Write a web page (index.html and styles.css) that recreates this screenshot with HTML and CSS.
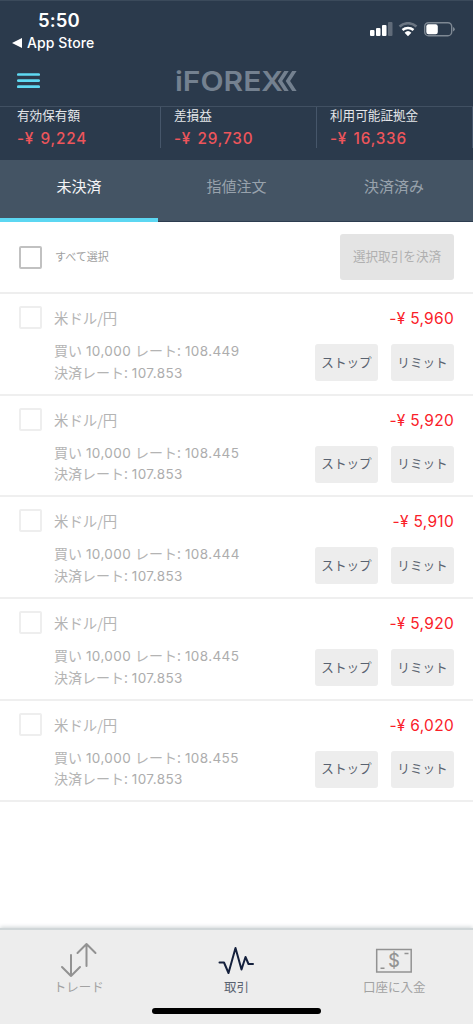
FILE: index.html
```html
<!DOCTYPE html>
<html lang="ja">
<head>
<meta charset="utf-8">
<title>iFOREX</title>
<link rel="stylesheet" href="styles.css">
</head>
<body>
<div class="app">
  <header class="header">
    <div class="status">
      <div class="clock-block">
        <div class="clock">5:50</div>
        <div class="back"><svg width="10" height="10" viewBox="0 0 10 10"><path d="M0 5 10 0v10z" fill="#fff"/></svg><span>App Store</span></div>
      </div>
      <svg class="status-icons" width="86" height="16" viewBox="0 0 86 16">
        <g fill="#fff"><rect x="0" y="8" width="4.500" height="6" rx="1"/><rect x="6" y="6" width="4.500" height="8" rx="1"/><rect x="12" y="3" width="4.500" height="11" rx="1"/><rect x="18" y="0" width="4.500" height="14" rx="1" opacity=".25"/></g>
        <g fill="none" stroke="#fff" stroke-width="2.500"><path d="M29.500 4.500a12.500 12.500 0 0 1 17 0" opacity=".3"/><path d="M32.500 8a8.500 8.500 0 0 1 11 0"/></g>
        <path d="m34.600 10.700 3.400 3.600 3.400-3.600a5 5 0 0 0-6.800 0z" fill="#fff"/>
        <rect x="54.700" y=".7" width="27" height="13" rx="3.800" fill="none" stroke="#7e8893" stroke-width="1.400"/>
        <rect x="56.300" y="2.200" width="11.500" height="10" rx="2.200" fill="#fff"/>
        <path d="M83 5v4.500q1.800-.6 1.800-2.200T83 5z" fill="#7e8893"/>
      </svg>
    </div>
    <div class="brand-row">
      <svg class="burger" width="23" height="16" viewBox="0 0 23 16"><path d="M1.300 1.500h20.400M1.300 7.600h20.400M1.300 13.700h20.400" stroke="#5fd9f2" stroke-width="2.700" stroke-linecap="round"/></svg>
      <svg class="logo" width="122" height="40" viewBox="0 0 122 40">
        <text class="logo-text" x="-1" y="28" textLength="108" lengthAdjust="spacingAndGlyphs">iFOREX</text>
        <path d="M108.300 8h4.400l-6.500 10 6.500 10h-4.400l-6.500-10zM116.200 8h4.400l-6.500 10 6.500 10h-4.400l-6.500-10z" fill="#748190"/>
      </svg>
    </div>
    <div class="summary">
      <div class="sum"><div class="sum-label">有効保有額</div><div class="sum-value">-¥ 9,224</div></div>
      <div class="sum"><div class="sum-label">差損益</div><div class="sum-value">-¥ 29,730</div></div>
      <div class="sum"><div class="sum-label">利用可能証拠金</div><div class="sum-value">-¥ 16,336</div></div>
    </div>
  </header>
  <nav class="tabs"><div class="tab active">未決済</div><div class="tab">指値注文</div><div class="tab">決済済み</div></nav>
  <div class="select-row"><span class="check"></span><span class="select-label">すべて選択</span><button class="close-btn">選択取引を決済</button></div>
  <main class="list">
    <section class="row"><span class="check light"></span><div class="info"><div class="pair">米ドル/円</div><div class="line">買い <b>10,000</b> レート: <b>108.449</b></div><div class="line">決済レート: <b>107.853</b></div></div><div class="side"><div class="pl">-¥ 5,960</div><div class="actions"><button>ストップ</button><button>リミット</button></div></div></section>
    <section class="row"><span class="check light"></span><div class="info"><div class="pair">米ドル/円</div><div class="line">買い <b>10,000</b> レート: <b>108.445</b></div><div class="line">決済レート: <b>107.853</b></div></div><div class="side"><div class="pl">-¥ 5,920</div><div class="actions"><button>ストップ</button><button>リミット</button></div></div></section>
    <section class="row"><span class="check light"></span><div class="info"><div class="pair">米ドル/円</div><div class="line">買い <b>10,000</b> レート: <b>108.444</b></div><div class="line">決済レート: <b>107.853</b></div></div><div class="side"><div class="pl">-¥ 5,910</div><div class="actions"><button>ストップ</button><button>リミット</button></div></div></section>
    <section class="row"><span class="check light"></span><div class="info"><div class="pair">米ドル/円</div><div class="line">買い <b>10,000</b> レート: <b>108.445</b></div><div class="line">決済レート: <b>107.853</b></div></div><div class="side"><div class="pl">-¥ 5,920</div><div class="actions"><button>ストップ</button><button>リミット</button></div></div></section>
    <section class="row"><span class="check light"></span><div class="info"><div class="pair">米ドル/円</div><div class="line">買い <b>10,000</b> レート: <b>108.455</b></div><div class="line">決済レート: <b>107.853</b></div></div><div class="side"><div class="pl">-¥ 6,020</div><div class="actions"><button>ストップ</button><button>リミット</button></div></div></section>
  </main>
  <footer class="bottom">
    <div class="nav">
      <div class="nav-item">
        <svg width="38" height="36" viewBox="0 0 38 36" fill="none" stroke="#929292" stroke-width="2" stroke-linecap="round" stroke-linejoin="round"><path d="M11 13v21M2 25l9 9 9-9M26.500 24V2M17.500 11l9-9 9 9"/></svg>
        <span>トレード</span>
      </div>
      <div class="nav-item current">
        <svg width="38" height="36" viewBox="0 0 38 36" fill="none" stroke="#14203c" stroke-width="2" stroke-linecap="round" stroke-linejoin="round"><path d="M2.500 20.500h4.500l4.500 10.500L18.500 6l6 21.500 4-12.500 3 7H36"/></svg>
        <span>取引</span>
      </div>
      <div class="nav-item">
        <svg width="38" height="36" viewBox="0 0 38 36" fill="none" stroke="#929292"><rect x="1.700" y="7.500" width="34.500" height="22.500" stroke-width="1.500"/><path d="M5.500 26.200h4M29.500 11.500h4" stroke-width="1.500"/><text class="dollar" x="19" y="24.800" text-anchor="middle">$</text></svg>
        <span>口座に入金</span>
      </div>
    </div>
    <div class="home"></div>
  </footer>
</div>
</body>
</html>
```
FILE: styles.css
```css
* { box-sizing: border-box; }
body { margin: 0; background: #fff; font-family: "Noto Sans CJK JP", sans-serif; }
button { border: 0; padding: 0 0 3px; font-family: inherit; white-space: nowrap; }
.app { width: 473px; height: 1024px; display: flex; flex-direction: column; overflow: hidden; }
.header { height: 160px; flex: none; background: #2b3a4c; border-top: 1px solid #3b4a5b; }
.status { height: 58px; display: flex; justify-content: space-between; padding: 7px 17px 0 12px; font-family: Inter, sans-serif; color: #fff; }
.clock { font-size: 18.5px; line-height: 24px; font-weight: 600; padding-left: 26px; letter-spacing: .1px; }
.back { display: flex; align-items: center; gap: 5px; font-size: 14px; line-height: 22px; font-weight: 500; letter-spacing: .1px; }
.status-icons { margin-top: 14px; }
.brand-row { height: 48px; display: flex; border-bottom: 1px solid #415062; padding-left: 17px; }
.burger { margin-top: 14px; }
.logo { margin: 4px 0 0 136px; overflow: visible; }
.logo-text { font: 600 27px Inter, sans-serif; fill: #748190; }
.summary { display: grid; grid-template-columns: 161px 156px 156px; height: 41px; }
.sum { border-right: 1px solid #46566a; padding-left: 13px; }
.sum:first-child { padding-left: 17px; }
.sum-label { font-size: 12.600px; line-height: 16px; color: #e4e6e9; white-space: nowrap; }
.sum-value { height: 25px; font: 500 15.300px/32px Inter, sans-serif; color: #ee555b; letter-spacing: .8px; word-spacing: 1.500px; white-space: nowrap; }
.tabs { height: 62px; flex: none; background: #445464; display: grid; grid-template-columns: 158px 157px 158px; }
.tab { text-align: center; font-size: 15px; line-height: 51px; color: #98a2ac; border-bottom: 1px solid #2d3d50; }
.tab.active { color: #f4f5f7; border-bottom: 4px solid #5cd7f2; }
.select-row { height: 72px; flex: none; display: flex; align-items: center; padding: 0 19px; border-bottom: 2px solid #eee; }
.check { width: 23px; height: 23px; flex: none; border: 2px solid #c1c1c1; border-radius: 2px; }
.check.light { border-color: #eee; }
.select-label { margin-left: 13px; padding-bottom: 2px; font-size: 11px; color: #a0a0a0; }
.close-btn { width: 114px; height: 46px; margin-left: auto; border-radius: 3px; background: #e4e4e4; color: #b0b0b0; font-size: 12.600px; }
.row { height: 101.700px; display: flex; padding: 12px 19px 0; border-bottom: 2px solid #efefef; }
.info { margin-left: 12px; flex: 1; color: #b4b4b4; white-space: nowrap; }
.pair { font-size: 14.400px; line-height: 23px; margin-bottom: 11px; }
.line { font-size: 14px; line-height: 21.500px; word-spacing: .8px; }
.line b { font: 400 13.500px Inter, sans-serif; letter-spacing: .4px; color: #adadad; }
.side { width: 139px; flex: none; }
.pl { text-align: right; font: 400 15.500px/25px Inter, sans-serif; color: #fa2029; letter-spacing: .3px; }
.actions { display: flex; justify-content: space-between; margin-top: 13px; }
.actions button { width: 63px; height: 37px; border-radius: 3px; background: #ededed; color: #596270; font-size: 12.600px; }
.bottom { margin-top: auto; height: 96px; flex: none; background: #ededed; border-top: 2px solid #d0d6d8; box-shadow: 0 -1px 4px #d0d5d7; }
.nav { display: grid; grid-template-columns: repeat(3, 1fr); height: 78px; padding-top: 12px; }
.nav-item { display: flex; flex-direction: column; align-items: center; color: #a2a2a2; font-size: 12.500px; line-height: 17px; }
.current { color: #596270; }
.dollar { font: 400 18px Inter, sans-serif; fill: #929292; stroke-width: .2px; }
.home { width: 169px; height: 6px; border-radius: 3px; background: #000; margin: 0 auto; }
```
